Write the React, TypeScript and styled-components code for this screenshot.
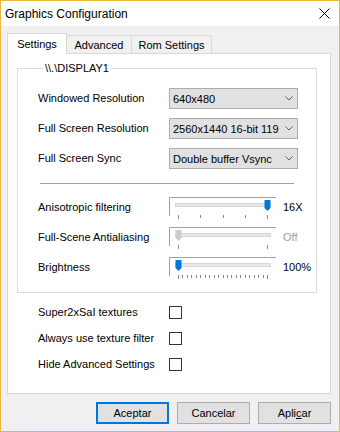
import styled, { createGlobalStyle } from 'styled-components';

const GlobalStyle = createGlobalStyle`
  html, body {
    margin: 0;
    padding: 0;
    background: #ffffff;
  }
  body {
    font-family: "Liberation Sans", Arial, sans-serif;
    font-size: 11px;
    color: #000;
  }
  * {
    box-sizing: border-box;
  }
`;

const Window = styled.div`
    width: 340px;
    height: 432px;
    border: 1px solid #e9b83f;
    display: flex;
    flex-direction: column;
    background: #f0f0f0;
    overflow: hidden;
`;
const TitleBar = styled.div`
    height: 25px;
    flex: none;
    background: #fff;
    display: flex;
    align-items: center;
    justify-content: space-between;
    padding: 0 9px 0 4px;
    font-size: 12px;
`;
const Body = styled.div`
    flex: 1;
    display: flex;
    flex-direction: column;
    padding: 7px 8px 0 6px;
`;
const TabStrip = styled.div`
    height: 20px;
    display: flex;
    align-items: flex-end;
`;
const Tab = styled.div<{ $active?: boolean; $w: number }>`
    position: relative;
    width: ${p => p.$w}px;
    height: ${p => (p.$active ? 21 : 18)}px;
    margin-bottom: ${p => (p.$active ? -1 : 0)}px;
    z-index: ${p => (p.$active ? 1 : 0)};
    border: 1px solid #d9d9d9;
    border-bottom: none;
    background: ${p => (p.$active ? '#fff' : '#f0f0f0')};
    display: flex;
    align-items: center;
    justify-content: center;
    &:not(:first-child) {
        margin-left: -1px;
    }
`;
const Panel = styled.div`
    height: 341px;
    flex: none;
    background: #fff;
    border: 1px solid #d9d9d9;
    display: flex;
    flex-direction: column;
`;
const GroupBox = styled.fieldset`
    margin: 8px 13px 0 9px;
    padding: 13px 0 9px 20px;
    border: 1px solid #dcdcdc;
    min-width: 0;
`;
const GroupTitle = styled.legend`
    margin-left: 5px;
    padding: 0 2px;
    line-height: 13px;
`;
const Stack = styled.div<{ $gap: number }>`
    display: flex;
    flex-direction: column;
    gap: ${p => p.$gap}px;
`;
const Row = styled.div<{ $h: number; $top?: boolean }>`
    height: ${p => p.$h}px;
    display: flex;
    align-items: ${p => (p.$top ? 'flex-start' : 'center')};
`;
const Label = styled.span<{ $top?: boolean }>`
    width: 131px;
    flex: none;
    line-height: 13px;
    padding-top: ${p => (p.$top ? 4 : 0)}px;
    white-space: nowrap;
`;
const Select = styled.div`
    width: 129px;
    height: 21px;
    background: #e1e1e1;
    border: 1px solid #adadad;
    display: flex;
    align-items: center;
    justify-content: space-between;
    padding: 0 4px 0 3px;
    white-space: nowrap;
    overflow: hidden;
`;
const Separator = styled.div`
    width: 254px;
    height: 1px;
    margin: 14px 0 13px 2px;
    background: #a0a0a0;
`;
const Value = styled.span<{ $disabled?: boolean }>`
    margin-left: 7px;
    padding-top: 4px;
    line-height: 13px;
    color: ${p => (p.$disabled ? '#a0a0a0' : '#000')};
`;
const Options = styled.div`
    margin-top: 6px;
    padding-left: 30px;
`;
const CheckRow = styled.div`
    height: 26px;
    display: flex;
    align-items: center;
`;
const CheckBox = styled.span`
    width: 13px;
    height: 13px;
    border: 1px solid #333;
    background: #fff;
`;
const ButtonRow = styled.div`
    margin-top: 8px;
    display: flex;
    justify-content: flex-end;
    gap: 8px;
`;
const Button = styled.button<{ $default?: boolean }>`
    width: 73px;
    height: 22px;
    padding: 0;
    font: inherit;
    color: #000;
    background: #e1e1e1;
    border: ${p => (p.$default ? '2px solid #0078d7' : '1px solid #adadad')};
`;

const Chevron = () => (
    <svg width="8" height="5" viewBox="0 0 8 5">
        <path d="M0.5 0.5 L4 4 L7.5 0.5" fill="none" stroke="#606060" strokeWidth="1" />
    </svg>
);

const CloseIcon = () => (
    <svg width="11" height="11" viewBox="0 0 11 11">
        <path d="M0.5 0.5 L10.5 10.5 M10.5 0.5 L0.5 10.5" stroke="#000" strokeWidth="1" />
    </svg>
);

const Slider = ({ pos, ticks, disabled }: { pos: number; ticks: number; disabled?: boolean }) => {
    const x0 = 9;
    const x1 = 98;
    const cx = Math.round(x0 + (x1 - x0) * pos) + 0.5;
    const xs = Array.from({ length: ticks }, (_, i) => Math.round(x0 + ((x1 - x0) * i) / (ticks - 1)) + 0.5);
    return (
        <svg width="107" height="24" viewBox="0 0 107 24" style={{ flex: 'none' }}>
            <path d="M0.5 19 V0.5 H107" fill="none" stroke="#a0a0a0" />
            <rect x="6.5" y="6.5" width="95" height="3" fill="#e7eaea" stroke="#d6d6d6" />
            {xs.map((x, i) => (
                <line
                    key={i}
                    x1={x}
                    x2={x}
                    y1={18}
                    y2={i === 0 || i === ticks - 1 ? 22 : 21}
                    stroke="#8a8a8a"
                />
            ))}
            <path
                d={`M${cx - 3} 3 H${cx + 3} V11 L${cx} 14 L${cx - 3} 11 Z`}
                fill={disabled ? '#cccccc' : '#0078d7'}
            />
        </svg>
    );
};

export default function App() {
    return (
        <>
            <GlobalStyle />
            <Window>
                <TitleBar>
                    <span>Graphics Configuration</span>
                    <CloseIcon />
                </TitleBar>
                <Body>
                    <TabStrip>
                        <Tab $active $w={60}>Settings</Tab>
                        <Tab $w={66}>Advanced</Tab>
                        <Tab $w={81}>Rom Settings</Tab>
                    </TabStrip>
                    <Panel>
                        <GroupBox>
                            <GroupTitle>\\.\DISPLAY1</GroupTitle>
                            <Stack $gap={9}>
                                <Row $h={21}>
                                    <Label>Windowed Resolution</Label>
                                    <Select>640x480<Chevron /></Select>
                                </Row>
                                <Row $h={21}>
                                    <Label>Full Screen Resolution</Label>
                                    <Select>2560x1440 16-bit 119<Chevron /></Select>
                                </Row>
                                <Row $h={21}>
                                    <Label>Full Screen Sync</Label>
                                    <Select>Double buffer Vsync<Chevron /></Select>
                                </Row>
                            </Stack>
                            <Separator />
                            <Stack $gap={4}>
                                <Row $h={26} $top>
                                    <Label $top>Anisotropic filtering</Label>
                                    <Slider pos={1} ticks={5} />
                                    <Value>16X</Value>
                                </Row>
                                <Row $h={26} $top>
                                    <Label $top>Full-Scene Antialiasing</Label>
                                    <Slider pos={0} ticks={2} disabled />
                                    <Value $disabled>Off</Value>
                                </Row>
                                <Row $h={26} $top>
                                    <Label $top>Brightness</Label>
                                    <Slider pos={0} ticks={21} />
                                    <Value>100%</Value>
                                </Row>
                            </Stack>
                        </GroupBox>
                        <Options>
                            <CheckRow>
                                <Label>Super2xSaI textures</Label>
                                <CheckBox />
                            </CheckRow>
                            <CheckRow>
                                <Label>Always use texture filter</Label>
                                <CheckBox />
                            </CheckRow>
                            <CheckRow>
                                <Label>Hide Advanced Settings</Label>
                                <CheckBox />
                            </CheckRow>
                        </Options>
                    </Panel>
                    <ButtonRow>
                        <Button $default>Aceptar</Button>
                        <Button>Cancelar</Button>
                        <Button>Apli<u>c</u>ar</Button>
                    </ButtonRow>
                </Body>
            </Window>
        </>
    );
}
